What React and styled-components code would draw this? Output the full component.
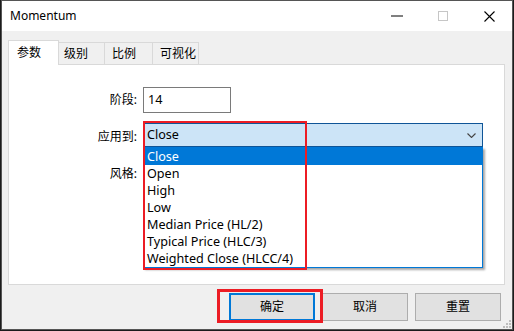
import React from 'react';
import styled, { createGlobalStyle } from 'styled-components';

const Global = createGlobalStyle`
  html, body { margin: 0; padding: 0; background: #1c1c1c; }
  body {
    width: 514px; height: 331px; overflow: hidden;
    font-family: "Noto Sans", "Noto Sans CJK SC", sans-serif;
    font-size: 12px; color: #000;
  }
`;

const Desktop = styled.div`
  width: 514px;
  height: 331px;
  padding-left: 1px;
  box-sizing: border-box;
`;

const Window = styled.div`
  position: relative;
  width: 512px;
  height: 330px;
  box-sizing: border-box;
  border: 1px solid #555;
  background: #f0f0f0;
  display: flex;
  flex-direction: column;
`;

const TitleBar = styled.div`
  height: 30px;
  flex: none;
  background: #fff;
  display: flex;
  align-items: center;
`;

const Title = styled.div`
  flex: 1;
  padding-left: 8px;
  font-size: 12px;
  line-height: 16px;
`;

const CaptionButton = styled.div`
  width: 46px;
  height: 30px;
  display: flex;
  align-items: center;
  justify-content: center;
`;

const Client = styled.div`
  flex: 1;
  display: flex;
  flex-direction: column;
  padding: 9px 7px 0 6px;
`;

const TabStrip = styled.div`
  display: flex;
  align-items: flex-end;
  height: 24px;
`;

const Tab = styled.div`
  box-sizing: border-box;
  width: ${p => p.$w}px;
  height: ${p => (p.$active ? 25 : 22)}px;
  margin-bottom: ${p => (p.$active ? -1 : 0)}px;
  padding-left: ${p => p.$pl}px;
  padding-top: ${p => (p.$active ? 4 : 3)}px;
  line-height: 16px;
  background: ${p => (p.$active ? '#fff' : '#f0f0f0')};
  border: 1px solid #d9d9d9;
  border-bottom: none;
  border-left-width: ${p => (p.$first ? 1 : 0)}px;
  position: relative;
  z-index: ${p => (p.$active ? 2 : 1)};
  white-space: nowrap;
`;

const Panel = styled.div`
  box-sizing: border-box;
  width: 497px;
  height: 221px;
  background: #fff;
  border: 1px solid #d9d9d9;
  padding-top: 22px;
  display: flex;
  flex-direction: column;
`;

const FieldRow = styled.div`
  display: grid;
  grid-template-columns: 128px auto;
  column-gap: 6px;
  align-items: center;
  margin-top: ${p => p.$top || 0}px;
`;

const Label = styled.div`
  text-align: right;
  line-height: 16px;
  padding-top: ${p => p.$nudge || 0}px;
`;

const TextInput = styled.div`
  box-sizing: border-box;
  width: 88px;
  height: 26px;
  border: 1px solid #7a7a7a;
  background: #fff;
  padding-left: 4px;
  font-size: 12.6px;
  line-height: 23px;
`;

const ComboWrap = styled.div`
  position: relative;
  width: 340px;
`;

const Combo = styled.div`
  box-sizing: border-box;
  height: 24px;
  border: 1px solid ${p => (p.$open ? '#0f5597' : '#7a7a7a')};
  background: ${p => (p.$open ? '#cce4f7' : '#fff')};
  display: flex;
  align-items: center;
  padding: 0 6px 0 3px;
  font-size: 12.6px;
`;

const ComboText = styled.div`
  flex: 1;
  line-height: 20px;
`;

const List = styled.div`
  position: absolute;
  top: 100%;
  left: 0;
  width: 340px;
  box-sizing: border-box;
  background: #fff;
  border: 1px solid #0078d7;
  box-shadow: 2px 2px 2px rgba(0, 0, 0, 0.35);
  z-index: 5;
`;

const Item = styled.div`
  height: 17px;
  line-height: 17px;
  padding-left: 3px;
  font-size: 12.6px;
  white-space: nowrap;
  background: ${p => (p.$selected ? '#0078d7' : 'transparent')};
  color: ${p => (p.$selected ? '#fff' : '#000')};
`;

const Highlight = styled.div`
  position: absolute;
  left: ${p => p.$l}px;
  top: ${p => p.$t}px;
  width: ${p => p.$w}px;
  height: ${p => p.$h}px;
  box-sizing: border-box;
  border: ${p => p.$b || 2}px solid #ec1c24;
  pointer-events: none;
  z-index: 10;
`;

const Footer = styled.div`
  display: flex;
  justify-content: flex-end;
  gap: 7px;
  padding: 8px 4px 0 0;
`;

const ButtonWrap = styled.div`
  position: relative;
`;

const Button = styled.div`
  box-sizing: border-box;
  width: 86px;
  height: 28px;
  background: #e1e1e1;
  border: ${p => (p.$default ? '2px solid #0078d7' : '1px solid #adadad')};
  display: flex;
  align-items: center;
  justify-content: center;
  line-height: 16px;
`;

const Grip = styled.svg`
  position: absolute;
  right: 1px;
  bottom: 1px;
`;

const items = [
  'Close',
  'Open',
  'High',
  'Low',
  'Median Price (HL/2)',
  'Typical Price (HLC/3)',
  'Weighted Close (HLCC/4)',
];

const tabs = [
  { t: '参数', w: 51, pl: 8, active: true },
  { t: '级别', w: 46, pl: 5 },
  { t: '比例', w: 48, pl: 7 },
  { t: '可视化', w: 46, pl: 7 },
];

export default function App() {
  return (
    <>
      <Global />
      <Desktop>
        <Window>
          <TitleBar>
            <Title>Momentum</Title>
            <CaptionButton>
              <svg width="12" height="2" viewBox="0 0 12 2">
                <line x1="0" y1="1" x2="12" y2="1" stroke="#000" strokeWidth="1" />
              </svg>
            </CaptionButton>
            <CaptionButton>
              <svg width="10" height="10" viewBox="0 0 10 10">
                <rect x="0.5" y="0.5" width="9" height="9" fill="none" stroke="#c6c6c6" strokeWidth="1" />
              </svg>
            </CaptionButton>
            <CaptionButton>
              <svg width="11" height="11" viewBox="0 0 11 11">
                <path d="M0.5 0.5 L10.5 10.5 M10.5 0.5 L0.5 10.5" stroke="#000" strokeWidth="1.1" fill="none" />
              </svg>
            </CaptionButton>
          </TitleBar>
          <Client>
            <TabStrip>
              {tabs.map((tb, i) => (
                <Tab key={tb.t} $active={tb.active} $first={i === 0} $w={tb.w} $pl={tb.pl}>
                  {tb.t}
                </Tab>
              ))}
            </TabStrip>
            <Panel>
              <FieldRow>
                <Label>阶段:</Label>
                <TextInput>14</TextInput>
              </FieldRow>
              <FieldRow $top={10}>
                <Label $nudge={3}>应用到:</Label>
                <ComboWrap>
                  <Combo $open>
                    <ComboText>Close</ComboText>
                    <svg width="9" height="5" viewBox="0 0 9 5">
                      <path d="M0.5 0.5 L4.5 4.5 L8.5 0.5" stroke="#444" strokeWidth="1.1" fill="none" />
                    </svg>
                  </Combo>
                  <List>
                    {items.map((t, i) => (
                      <Item key={t} $selected={i === 0}>{t}</Item>
                    ))}
                  </List>
                  <Highlight $l={0} $t={-2} $w={164} $h={149} />
                </ComboWrap>
              </FieldRow>
              <FieldRow $top={14}>
                <Label $nudge={2}>风格:</Label>
                <ComboWrap>
                  <Combo>
                    <ComboText />
                  </Combo>
                </ComboWrap>
              </FieldRow>
            </Panel>
            <Footer>
              <ButtonWrap>
                <Button $default>确定</Button>
                <Highlight $l={-12} $t={-4} $w={106} $h={34} $b={3} />
              </ButtonWrap>
              <ButtonWrap>
                <Button>取消</Button>
              </ButtonWrap>
              <ButtonWrap>
                <Button>重置</Button>
              </ButtonWrap>
            </Footer>
          </Client>
          <Grip width="9" height="9" viewBox="0 0 9 9">
            <rect x="7" y="1" width="2" height="2" fill="#bdbdbd" />
            <rect x="4" y="4" width="2" height="2" fill="#bdbdbd" />
            <rect x="7" y="4" width="2" height="2" fill="#bdbdbd" />
            <rect x="1" y="7" width="2" height="2" fill="#bdbdbd" />
            <rect x="4" y="7" width="2" height="2" fill="#bdbdbd" />
            <rect x="7" y="7" width="2" height="2" fill="#bdbdbd" />
          </Grip>
        </Window>
      </Desktop>
    </>
  );
}
